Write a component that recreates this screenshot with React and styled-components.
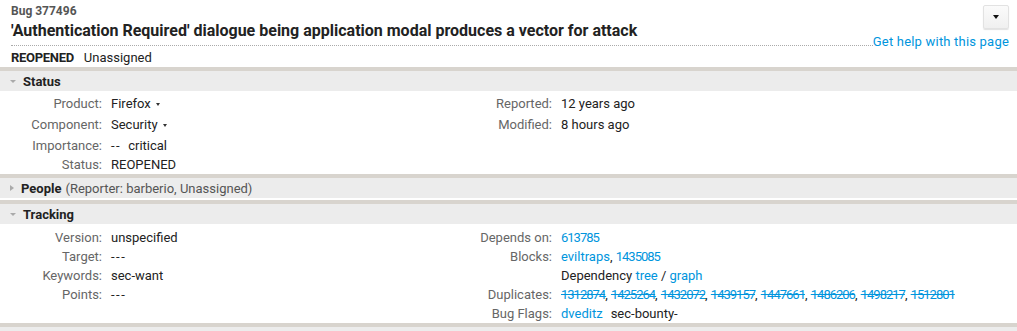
import React from 'react'
import styled, { createGlobalStyle } from 'styled-components'

const colors = {
  text: '#222',
  label: '#666',
  muted: '#555',
  link: '#0095dd',
  barBg: '#ececec',
  barEdge: '#d8d4ce',
  dotted: '#aaa'
}

const Global = createGlobalStyle`
  body {
    margin: 0;
    background: #fff;
    font-family: Roboto, "Noto Sans", sans-serif;
    font-size: 13px;
    color: ${colors.text};
  }
`

const Page = styled.div`
  width: 1017px;
`

const Header = styled.div`
  display: flex;
  padding: 0 8px 0 11px;
`

const TitleBlock = styled.div`
  flex: 1;
  padding: 3px 0 4px;
  border-bottom: 1px dotted ${colors.dotted};
`

const BugId = styled.div`
  font-size: 12px;
  font-weight: 700;
  line-height: 16px;
  color: ${colors.muted};
  margin-bottom: 2px;
`

const Title = styled.h1`
  margin: 0;
  font-size: 16px;
  font-weight: 700;
  line-height: 20px;
  color: ${colors.text};
`

const Side = styled.div`
  display: flex;
  flex-direction: column;
  align-items: flex-end;
  padding-top: 5px;
  margin-bottom: -4px;
`

const MenuButton = styled.button`
  width: 26px;
  height: 24px;
  padding: 0;
  border: 1px solid #e2e2e2;
  border-radius: 2px;
  background: linear-gradient(#fbfbfb, #f0f0f0);
  box-shadow: 0 1px 1px rgba(0, 0, 0, 0.12);
  display: flex;
  align-items: center;
  justify-content: center;
  &:after {
    content: '';
    border-left: 3px solid transparent;
    border-right: 3px solid transparent;
    border-top: 4px solid #111;
  }
`

const Link = styled.a`
  color: ${colors.link};
  text-decoration: ${p => (p.closed ? 'line-through' : 'none')};
  letter-spacing: ${p => (p.num ? '-1px' : 'normal')};
  cursor: pointer;
`

const HelpLink = styled(Link)`
  margin-top: 5px;
  line-height: 16px;
  letter-spacing: 0.2px;
  white-space: nowrap;
`

const StatusLine = styled.div`
  display: flex;
  gap: 10px;
  padding: 0 11px;
  line-height: 18px;
  margin: 3px 0 0;
  b {
    font-weight: 700;
    letter-spacing: -0.3px;
  }
`

const SectionBar = styled.div`
  display: flex;
  align-items: center;
  height: 20px;
  border-top: 4px solid ${colors.barEdge};
  background: ${colors.barBg};
  padding-left: 10px;
  margin-bottom: ${p => (p.open ? 0 : 2)}px;
  font-weight: 700;
  white-space: nowrap;
`

const Twisty = styled.span`
  width: 0;
  height: 0;
  margin-right: 7px;
  ${p => p.open
    ? `border-left: 3px solid transparent;
       border-right: 3px solid transparent;
       border-top: 3px solid #aaa;`
    : `border-top: 3px solid transparent;
       border-bottom: 3px solid transparent;
       border-left: 4px solid #aaa;`}
`

const Summary = styled.span`
  font-weight: 400;
  color: ${colors.muted};
  margin-left: 4px;
`

const SectionBody = styled.div`
  display: flex;
  padding-top: ${p => p.pad}px;
`

const Column = styled.div`
  width: ${p => p.width};
  flex: ${p => (p.width ? 'none' : 1)};
  display: grid;
  grid-template-columns: ${p => p.labelWidth}px 1fr;
  column-gap: 9px;
  align-content: start;
`

const Label = styled.div`
  text-align: right;
  color: ${colors.label};
  line-height: 19px;
`

const Value = styled.div`
  line-height: 19px;
  white-space: nowrap;
  ${p => p.menu && 'padding-bottom: 2px;'}
`

const Caret = styled.span`
  display: inline-block;
  vertical-align: middle;
  margin-left: 5px;
  border-left: 2.5px solid transparent;
  border-right: 2.5px solid transparent;
  border-top: 3px solid #333;
`

const Dashes = styled.span`
  letter-spacing: 1.5px;
  margin-right: ${p => p.gap || 0}px;
`

const Spaced = styled.span`
  margin-right: ${p => p.gap}px;
`

const BottomBar = styled.div`
  height: 4px;
  border-top: 4px solid ${colors.barEdge};
  background: ${colors.barBg};
`

const Field = ({ label, children, menu }) => (
  <>
    <Label>{label}</Label>
    <Value menu={menu}>{children}</Value>
  </>
)

const duplicates = ['1312874', '1425264', '1432072', '1439157', '1447661', '1486206', '1498217', '1512801']

export default function App() {
  return (
    <Page>
      <Global />
      <Header>
        <TitleBlock>
          <BugId>Bug 377496</BugId>
          <Title>'Authentication Required' dialogue being application modal produces a vector for attack</Title>
        </TitleBlock>
        <Side>
          <MenuButton aria-label="More" />
          <HelpLink>Get help with this page</HelpLink>
        </Side>
      </Header>
      <StatusLine>
        <b>REOPENED</b>
        <span>Unassigned</span>
      </StatusLine>

      <SectionBar open><Twisty open />Status</SectionBar>
      <SectionBody pad={3}>
        <Column width="440px" labelWidth={102}>
          <Field label="Product:" menu>Firefox<Caret /></Field>
          <Field label="Component:" menu>Security<Caret /></Field>
          <Field label="Importance:"><Dashes gap={7}>--</Dashes>critical</Field>
          <Field label="Status:">REOPENED</Field>
        </Column>
        <Column labelWidth={112}>
          <Field label="Reported:" menu>12 years ago</Field>
          <Field label="Modified:" menu>8 hours ago</Field>
        </Column>
      </SectionBody>

      <SectionBar><Twisty />People<Summary>(Reporter: barberio, Unassigned)</Summary></SectionBar>

      <SectionBar open><Twisty open />Tracking</SectionBar>
      <SectionBody pad={4}>
        <Column width="440px" labelWidth={102}>
          <Field label="Version:">unspecified</Field>
          <Field label="Target:"><Dashes>---</Dashes></Field>
          <Field label="Keywords:">sec-want</Field>
          <Field label="Points:"><Dashes>---</Dashes></Field>
        </Column>
        <Column labelWidth={112}>
          <Field label="Depends on:"><Link num>613785</Link></Field>
          <Field label="Blocks:"><Link>eviltraps</Link>, <Link num>1435085</Link></Field>
          <Field label="">Dependency <Link>tree</Link> / <Link>graph</Link></Field>
          <Field label="Duplicates:">
            {duplicates.map((id, i) => (
              <React.Fragment key={id}>
                <Link closed num>{id}</Link>{i < duplicates.length - 1 ? ', ' : ''}
              </React.Fragment>
            ))}
          </Field>
          <Field label="Bug Flags:"><Spaced gap={8}><Link>dveditz</Link></Spaced>sec-bounty-</Field>
        </Column>
      </SectionBody>
      <BottomBar />
    </Page>
  )
}
